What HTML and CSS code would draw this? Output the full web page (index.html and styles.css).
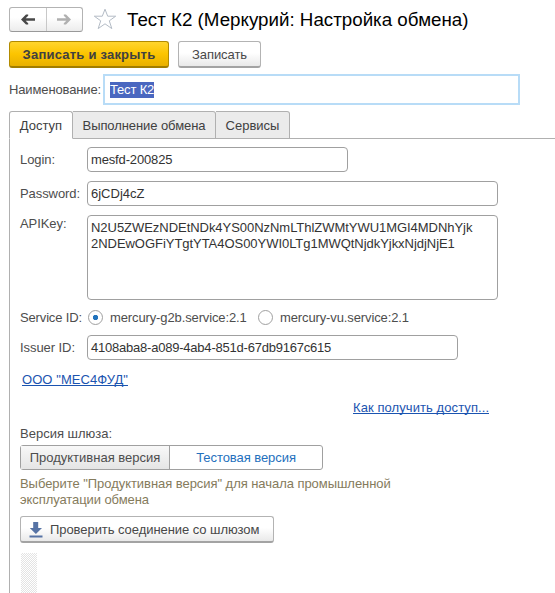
FILE: index.html
```
<!DOCTYPE html>
<html lang="ru">
<head>
<meta charset="utf-8">
<title>Тест К2 (Меркурий: Настройка обмена)</title>
<link rel="stylesheet" href="styles.css">
</head>
<body>
<header class="header">
  <div class="nav">
    <button class="nav-btn" aria-label="Назад"><svg width="14" height="11" viewBox="0 0 14 11" fill="#484848"><path d="M0 5.5 5 .5h2.2v1.2L4.7 4.2H14v2.6H4.7l2.5 2.5v1.2H5z"/></svg></button>
    <button class="nav-btn" aria-label="Вперед"><svg width="14" height="11" viewBox="0 0 14 11" fill="#b0b0b0"><path d="M14 5.5 9 .5H6.8v1.2l2.5 2.5H0v2.6h9.3L6.8 9.3v1.2H9z"/></svg></button>
  </div>
  <svg class="star" width="24" height="22" viewBox="0 0 24 22" fill="#fff" stroke="#b4bcc6" stroke-width="1"><path d="M12 1.2 14.7 8.2H22.7L16.3 12.8 18.8 20.6 12 15.8 5.2 20.6 7.7 12.8 1.3 8.2H9.3Z"/></svg>
  <h1 class="title">Тест К2 (Меркурий: Настройка обмена)</h1>
</header>
<div class="commands">
  <button class="btn btn-primary">Записать и закрыть</button>
  <button class="btn btn-save">Записать</button>
</div>
<div class="name-row">
  <label class="name-label">Наименование:</label>
  <div class="name-input"><span class="selected">Тест К2</span></div>
</div>
<nav class="tabs">
  <div class="tab tab-active">Доступ</div>
  <div class="tab tab-exchange">Выполнение обмена</div>
  <div class="tab tab-services">Сервисы</div>
</nav>
<main class="panel">
  <div class="row row-login"><label class="label">Login:</label><div class="input input-login">mesfd-200825</div></div>
  <div class="row row-password"><label class="label">Password:</label><div class="input input-wide">6jCDj4cZ</div></div>
  <div class="row row-key"><label class="label label-key">APIKey:</label><div class="input area"><div>N2U5ZWEzNDEtNDk4YS00NzNmLThlZWMtYWU1MGI4MDNhYjk</div><div>2NDEwOGFiYTgtYTA4OS00YWI0LTg1MWQtNjdkYjkxNjdjNjE1</div></div></div>
  <div class="row row-service"><label class="label label-service">Service ID:</label>
    <span class="radio radio-on"></span><span class="option">mercury-g2b.service:2.1</span>
    <span class="radio"></span><span class="option">mercury-vu.service:2.1</span>
  </div>
  <div class="row row-issuer"><label class="label">Issuer ID:</label><div class="input input-issuer">4108aba8-a089-4ab4-851d-67db9167c615</div></div>
  <div class="company"><a class="link link-company">ООО "МЕС4ФУД"</a></div>
  <div class="help"><a class="link link-help">Как получить доступ...</a></div>
  <div class="gateway-label">Версия шлюза:</div>
  <div class="switch"><div class="switch-item switch-on">Продуктивная версия</div><div class="switch-item switch-test">Тестовая версия</div></div>
  <p class="hint">Выберите "Продуктивная версия" для начала промышленной<br><span class="hint-end">эксплуатации обмена</span></p>
  <button class="btn btn-check"><svg width="14" height="16" viewBox="0 0 14 16" fill="#5673a5"><path d="M4.2 0h5v6H13L6.9 12 .8 6h3.4zM.5 13.5h13v2H.5z"/></svg><span>Проверить соединение со шлюзом</span></button>
  <div class="hatch"></div>
</main>
</body>
</html>
```
FILE: styles.css
```
* { box-sizing: border-box; }
body {
  margin: 0;
  width: 555px;
  height: 593px;
  overflow: hidden;
  display: flex;
  flex-direction: column;
  background: #fff;
  color: #4d4d4d;
  font: 13px/16px "Liberation Sans", Arial, sans-serif;
  white-space: nowrap;
}
button { font: inherit; color: inherit; padding: 0; }

.header { display: flex; height: 41px; padding: 7px 0 0 9px; flex: none; }
.nav {
  display: flex;
  width: 74px;
  height: 25px;
  border: 1px solid #b3b3b3;
  border-bottom-color: #999;
  border-radius: 3px;
  background: linear-gradient(#fff 40%, #ececec);
}
.nav-btn { flex: 1; display: flex; align-items: center; justify-content: center; border: 0; background: none; }
.nav-btn + .nav-btn { border-left: 1px solid #c8c8c8; }
.star { margin: 1px 0 0 10px; }
.title { margin: 2px 0 0 10px; font-size: 18.75px; line-height: 22px; font-weight: 400; color: #000; }

.commands { display: flex; gap: 9px; padding-left: 9px; height: 33px; flex: none; }
.btn {
  height: 27px;
  padding-top: 1px;
  border: 1px solid #b3b3b3;
  border-bottom: 2px solid #a3a3a3;
  border-radius: 3px;
  background: linear-gradient(#fff 45%, #e9e9e9);
  color: #484848;
}
.btn-primary {
  width: 160px;
  font-weight: 700;
  letter-spacing: .22px;
  color: #404040;
  border-color: #b28b00;
  border-bottom-color: #a17d00;
  background: linear-gradient(#ffd52e, #fcc400 50%, #e8b000);
}
.btn-save { width: 83px; letter-spacing: -.05px; }

.name-row { display: flex; align-items: center; height: 31px; padding-left: 9px; flex: none; }
.name-label { width: 94px; letter-spacing: -.13px; }
.name-input { width: 417px; height: 31px; padding: 6px 5px; border: 2px solid #b8dcf7; }
.selected { display: block; width: 44px; height: 16px; background: #4a67c0; color: #fff; line-height: 16px; letter-spacing: -.17px; }

.tabs { display: flex; height: 28px; margin: 6px 0 0 9px; flex: none; border-bottom: 1px solid #b0b0b0; }
.tab {
  height: 28px;
  padding-top: 6px;
  border: 1px solid #b0b0b0;
  border-left: 0;
  border-radius: 0 3px 0 0;
  background: #ebebeb;
  text-align: center;
  color: #404040;
}
.tab-active { width: 64px; border-left: 1px solid #b0b0b0; border-radius: 3px 3px 0 0; border-bottom-color: #fff; background: #fff; }
.tab-exchange { width: 143px; letter-spacing: -.08px; }
.tab-services { width: 74px; }

.panel { flex: 1; min-height: 0; margin-left: 9px; border-left: 1px solid #b0b0b0; padding: 8px 0 0 10px; }
.row { display: flex; align-items: center; height: 25px; }
.label { width: 67px; letter-spacing: -.07px; }
.label-service { letter-spacing: -.15px; }
.input { height: 25px; padding: 3px 3px; line-height: 17px; border: 1px solid #a0a0a0; border-radius: 4px; color: #333; }
.input-login { width: 261px; letter-spacing: -.15px; }
.input-wide { width: 411px; }
.input-issuer { width: 371px; letter-spacing: -.22px; }
.row-password { margin-top: 9px; }
.row-key { height: 85px; margin-top: 9px; align-items: flex-start; }
.label-key { margin-top: 1px; }
.area { width: 411px; height: 85px; padding-top: 4px; line-height: 16px; letter-spacing: -.04px; }
.row-service { height: 17px; margin-top: 9px; }
.radio { width: 15px; height: 15px; margin: 0 7px 0 1px; border: 1px solid #a0a0a0; border-radius: 50%; background: #fff; }
.radio-on { background: radial-gradient(circle, #2273bd 2.3px, #fff 3px); }
.option { width: 147px; letter-spacing: -.12px; }
.row-issuer { margin-top: 9px; }
.company { height: 15px; margin: 11px 0 0 2px; }
.link { display: inline-block; height: 15px; line-height: 18px; color: #1b54b0; border-bottom: 1px solid #1b54b0; }
.link-company { letter-spacing: .07px; }
.link-help { letter-spacing: .08px; }
.help { height: 15px; margin: 13px 0 0 333px; }
.gateway-label { margin-top: 12px; height: 19px; }
.switch { display: flex; width: 303px; height: 25px; border: 1px solid #a0a0a0; border-radius: 3px; line-height: 23px; text-align: center; }
.switch-on { width: 149px; border-right: 1px solid #a0a0a0; background: linear-gradient(#f8f8f8, #e5e5e5); }
.switch-test { flex: 1; color: #2470bd; letter-spacing: -.06px; }
.hint { margin: 6px 0 0; height: 40px; color: #857b5c; letter-spacing: -.05px; }
.hint-end { letter-spacing: -.08px; }
.btn-check { display: flex; align-items: center; width: 254px; padding-left: 8px; gap: 7px; letter-spacing: -.06px; }
.hatch {
  width: 16px;
  height: 48px;
  margin: 10px 0 0 1px;
  background: repeating-conic-gradient(#e3e3e3 0 25%, #fff 0 50%) 0 0 / 2px 2px;
}
```
